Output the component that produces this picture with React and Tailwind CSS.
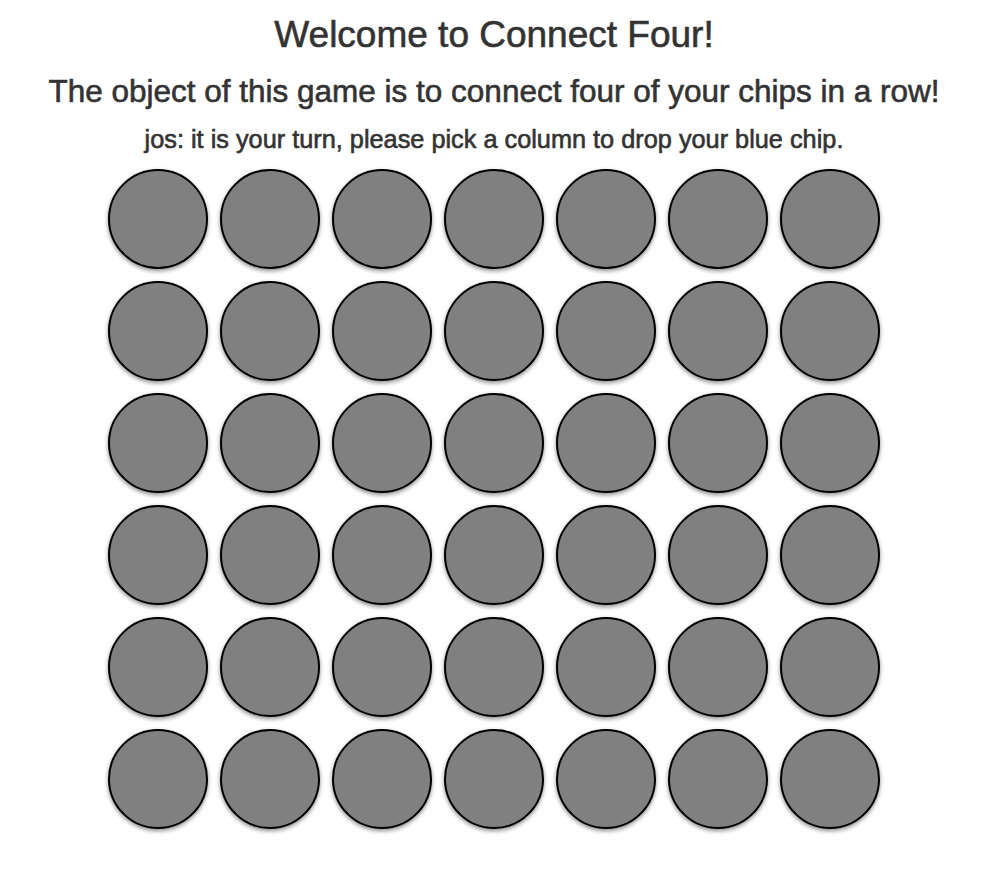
import React from 'react';

const ROWS = 6;
const COLS = 7;

function Chip() {
  return (
    <div className="h-[100px] w-[100px] rounded-full border-2 border-black bg-[#808080] shadow-[0_2px_4px_rgba(0,0,0,0.45)]" />
  );
}

export default function App() {
  const board = Array.from({ length: ROWS }, () => Array.from({ length: COLS }, () => null));

  return (
    <div className="min-h-screen bg-white pl-[5px] text-center text-[#333] font-['Helvetica_Neue','Liberation_Sans',Arial,sans-serif] [-webkit-text-stroke:0.6px_#333]">
      <h1 className="pt-[15px] text-[37px] leading-[1.1]">Welcome to Connect Four!</h1>
      <h2 className="mt-[18px] text-[31.5px] leading-[1.1]">The object of this game is to connect four of your chips in a row!</h2>
      <h3 className="mt-[18px] text-[25.3px] leading-[1.1]">jos: it is your turn, please pick a column to drop your blue chip.</h3>
      <div className="mt-[15px] flex justify-center">
        <div className="grid grid-cols-7 gap-[12px]">
          {board.map((row, r) =>
            row.map((cell, c) => <Chip key={`${r}-${c}`} />)
          )}
        </div>
      </div>
    </div>
  );
}
